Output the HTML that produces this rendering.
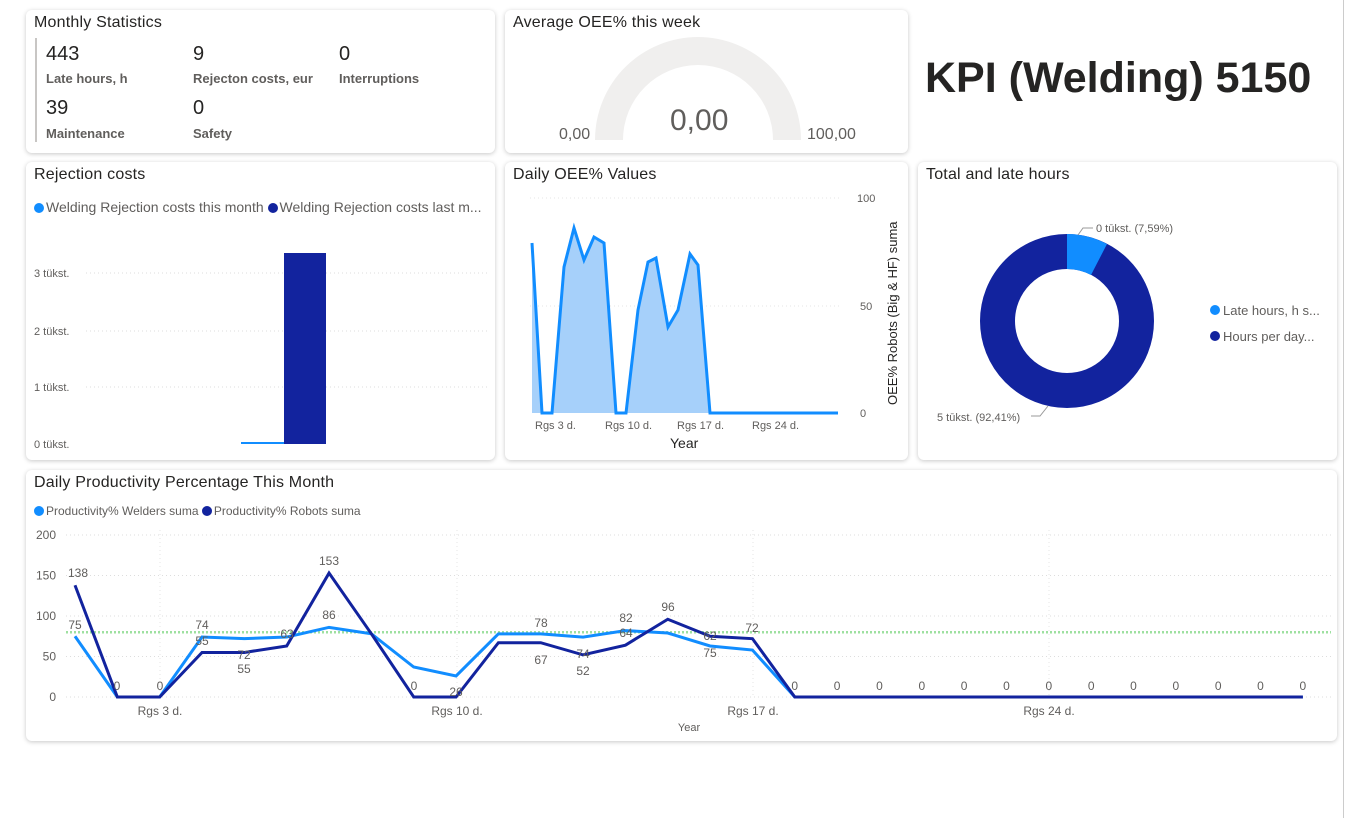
<!DOCTYPE html>
<html><head><meta charset="utf-8"><style>
body{margin:0;width:1346px;height:818px;background:#fff;font-family:"Liberation Sans",sans-serif;position:relative;overflow:hidden;color:#252423}
.c{position:absolute;background:#fff;border-radius:6px;box-shadow:0 1px 5px rgba(0,0,0,.22)}
.t{position:absolute;left:8px;top:4px;font-size:16px;color:#252423;letter-spacing:.2px}
.a{position:absolute;white-space:nowrap}
.n{font-size:20px;color:#252423}
.l{font-size:13px;font-weight:bold;color:#605e5c}
.s{font-size:11px;color:#605e5c}
.d{display:inline-block;width:10px;height:10px;border-radius:50%;vertical-align:-1px;margin-right:2px}
</style></head><body>
<div style="position:absolute;left:1343px;top:0;width:1px;height:818px;background:#ccc"></div>

<div class="c" style="left:26px;top:10px;width:469px;height:143px">
<div class="t">Monthly Statistics</div>
<div style="position:absolute;left:9px;top:28px;width:2px;height:104px;background:#c8c6c4"></div>
<div class="a n" style="left:20px;top:33px">443</div><div class="a l" style="left:20px;top:61px">Late hours, h</div>
<div class="a n" style="left:167px;top:33px">9</div><div class="a l" style="left:167px;top:61px">Rejecton costs, eur</div>
<div class="a n" style="left:313px;top:33px">0</div><div class="a l" style="left:313px;top:61px">Interruptions</div>
<div class="a n" style="left:20px;top:87px">39</div><div class="a l" style="left:20px;top:116px">Maintenance</div>
<div class="a n" style="left:167px;top:87px">0</div><div class="a l" style="left:167px;top:116px">Safety</div>
</div>

<div class="c" style="left:505px;top:10px;width:403px;height:143px">
<div class="t">Average OEE% this week</div>
<svg style="position:absolute;left:0;top:0" width="403" height="143"><path d="M90 130 A103 103 0 0 1 296 130 L268 130 A75 75 0 0 0 118 130 Z" fill="#f0efee"/></svg>
<div class="a" style="left:165px;top:94px;font-size:30px;color:#605e5c">0,00</div>
<div class="a" style="left:54px;top:116px;font-size:16px;color:#605e5c">0,00</div>
<div class="a" style="left:302px;top:116px;font-size:16px;color:#605e5c">100,00</div>
</div>

<div class="a" style="left:925px;top:54px;font-size:43px;font-weight:bold;color:#252423">KPI (Welding) 5150</div>

<div class="c" style="left:26px;top:162px;width:469px;height:298px">
<div class="t">Rejection costs</div>
<div class="a s" style="left:8px;top:37px;font-size:14px"><span class="d" style="background:#118dff"></span>Welding Rejection costs this month <span class="d" style="background:#12239e"></span>Welding Rejection costs last m...</div>
<svg style="position:absolute;left:0;top:0" width="469" height="298">
<g stroke="#ddd" stroke-dasharray="1 3"><line x1="60" x2="462" y1="111" y2="111"/><line x1="60" x2="462" y1="169" y2="169"/><line x1="60" x2="462" y1="225" y2="225"/></g>
<rect x="258" y="91" width="42" height="191" fill="#12239e"/><rect x="215" y="280" width="43" height="2" fill="#118dff"/>
<g font-size="11" fill="#605e5c" font-family="Liberation Sans"><text x="8" y="115">3 tükst.</text><text x="8" y="173">2 tükst.</text><text x="8" y="229">1 tükst.</text><text x="8" y="286">0 tükst.</text></g>
</svg></div>

<div class="c" style="left:505px;top:162px;width:403px;height:298px">
<div class="t">Daily OEE% Values</div>
<svg style="position:absolute;left:0;top:0" width="403" height="298">
<g stroke="#e5e5e5" stroke-dasharray="1 3"><line x1="25" x2="335" y1="36" y2="36"/><line x1="25" x2="335" y1="144" y2="144"/></g>
<path d="M27 81 L37 251 L47 251 L59 105 L69 66 L79 98 L89 75 L99 81 L111 251 L121 251 L133 148 L143 100 L151 96 L163 165 L173 148 L185 92 L193 103 L205 251 L333 251 L333 251 L27 251Z" fill="#a6d0fa"/>
<path d="M27 81 L37 251 L47 251 L59 105 L69 66 L79 98 L89 75 L99 81 L111 251 L121 251 L133 148 L143 100 L151 96 L163 165 L173 148 L185 92 L193 103 L205 251 L333 251" fill="none" stroke="#118dff" stroke-width="3"/>
<g font-size="11" fill="#605e5c" font-family="Liberation Sans"><text x="352" y="40">100</text><text x="355" y="148">50</text><text x="355" y="255">0</text>
<text x="30" y="267">Rgs 3 d.</text><text x="100" y="267">Rgs 10 d.</text><text x="172" y="267">Rgs 17 d.</text><text x="247" y="267">Rgs 24 d.</text></g>
<text x="165" y="286" font-size="14" fill="#252423" font-family="Liberation Sans">Year</text>
<text transform="translate(392,243) rotate(-90)" font-size="13" fill="#252423" font-family="Liberation Sans">OEE% Robots (Big &amp; HF) suma</text>
</svg></div>

<div class="c" style="left:918px;top:162px;width:419px;height:298px">
<div class="t">Total and late hours</div>
<svg style="position:absolute;left:0;top:0" width="419" height="298">
<circle cx="149" cy="159" r="69.5" fill="none" stroke="#12239e" stroke-width="35"/>
<path d="M149 72 A87 87 0 0 1 189 82 L173 113 A52 52 0 0 0 149 107Z" fill="#118dff"/>
<path d="M160 73 L165 66 L175 66 M130 244 L122 254 L113 254" stroke="#999" fill="none"/>
<g font-size="11" fill="#605e5c" font-family="Liberation Sans"><text x="178" y="70">0 tūkst. (7,59%)</text><text x="19" y="259">5 tūkst. (92,41%)</text></g>
<g font-size="13" fill="#605e5c" font-family="Liberation Sans"><circle cx="297" cy="148" r="5" fill="#118dff"/><text x="305" y="153">Late hours, h s...</text><circle cx="297" cy="174" r="5" fill="#12239e"/><text x="305" y="179">Hours per day...</text></g>
</svg></div>

<div class="c" style="left:26px;top:470px;width:1311px;height:271px">
<div class="t">Daily Productivity Percentage This Month</div>
<div class="a s" style="left:8px;top:34px;font-size:12px"><span class="d" style="background:#118dff"></span>Productivity% Welders suma <span class="d" style="background:#12239e"></span>Productivity% Robots suma</div>
<svg id="p" style="position:absolute;left:0;top:0" width="1311" height="271"></svg>
</div>
<script>
var s=document.getElementById('p'),h='';
var W=[75,0,0,74,72,74,86,78,37,26,78,78,74,82,79,63,58,0,0,0,0,0,0,0,0,0,0,0,0,0];
var R=[138,0,0,55,55,63,153,78,0,0,67,67,52,64,96,75,72,0,0,0,0,0,0,0,0,0,0,0,0,0];
function X(i){return 49+i*42.34}function Y(v){return 227-v*0.81}
[0,50,100,150,200].forEach(function(v){h+='<line x1="40" x2="1305" y1="'+Y(v)+'" y2="'+Y(v)+'" stroke="#ddd" stroke-dasharray="1 3"/><text x="30" y="'+(Y(v)+4)+'" text-anchor="end" font-size="12" fill="#605e5c">'+v+'</text>';});
[134,431,727,1023].forEach(function(x){h+='<line x1="'+x+'" x2="'+x+'" y1="60" y2="227" stroke="#e5e5e5" stroke-dasharray="1 3"/>';});
h+='<line x1="40" x2="1305" y1="'+Y(80)+'" y2="'+Y(80)+'" stroke="#9ee0a0" stroke-width="2.5" stroke-dasharray="2 2"/>';
function pl(a,c){return '<polyline fill="none" stroke="'+c+'" stroke-width="3" points="'+a.map(function(v,i){return X(i)+','+Y(v)}).join(' ')+'"/>';}
h+=pl(W,'#118dff')+pl(R,'#12239e');
h+='<g font-size="12" fill="#605e5c" text-anchor="middle">';
var L=[[75,624,'75'],[78,572,'138'],[117,685,'0'],[160,685,'0'],[202,624,'74'],[202,640,'55'],[244,654,'72'],[244,668,'55'],[287,633,'63'],[329,560,'153'],[329,614,'86'],[414,685,'0'],[456,691,'26'],[541,622,'78'],[541,659,'67'],[583,653,'74'],[583,670,'52'],[626,617,'82'],[626,632,'64'],[668,606,'96'],[710,635,'62'],[710,652,'75'],[752,627,'72']];
for(var i=17;i<30;i++)L.push([X(i)+26,685,'0']);
L.forEach(function(a){h+='<text x="'+(a[0]-26)+'" y="'+(a[1]-470+5)+'">'+a[2]+'</text>';});
h+='</g><g font-size="12" fill="#605e5c" text-anchor="middle"><text x="134" y="245">Rgs 3 d.</text><text x="431" y="245">Rgs 10 d.</text><text x="727" y="245">Rgs 17 d.</text><text x="1023" y="245">Rgs 24 d.</text><text x="663" y="261" font-size="11">Year</text></g>';
s.innerHTML=h;s.setAttribute('font-family','Liberation Sans');
</script>
</body></html>
